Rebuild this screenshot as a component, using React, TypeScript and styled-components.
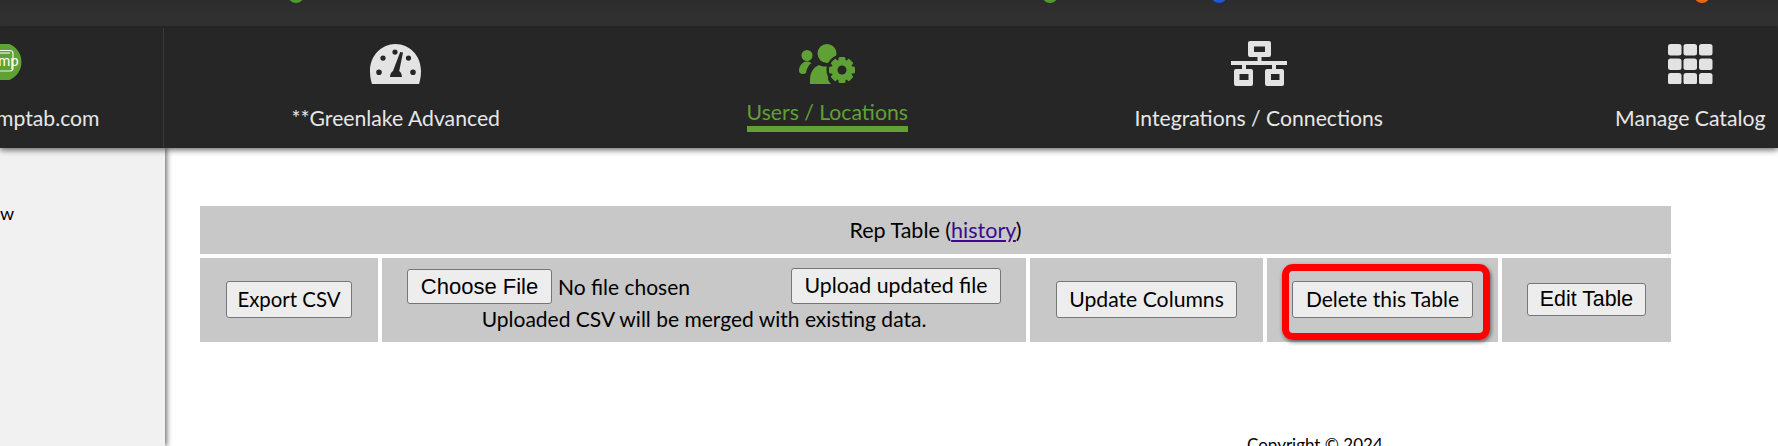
import styled, { createGlobalStyle } from "styled-components";

const GlobalStyle = createGlobalStyle`
  html, body {
    margin: 0;
    padding: 0;
    height: 100%;
    overflow: hidden;
    background: #fff;
    font-family: "Lato", "Noto Sans", sans-serif;
  }
`;

const Page = styled.div`
  width: 1778px;
  height: 446px;
  display: flex;
  flex-direction: column;
  overflow: hidden;
`;

const TopBar = styled.div`
  height: 26px;
  flex: none;
  background: linear-gradient(#2c2c2c, #323232);
  border-bottom: 2px solid #2a2a2a;
  display: grid;
  grid-template-columns: 288px 16px 738px 16px 153px 16px 467px 16px;
  overflow: hidden;
`;

const Dot = styled.span<{ $color: string }>`
  width: 16px;
  height: 16px;
  margin-top: -13px;
  border-radius: 50%;
  background: ${({ $color }) => $color};
`;

const Nav = styled.nav`
  height: 120px;
  flex: none;
  background: #262626;
  display: flex;
  position: relative;
  z-index: 2;
  box-shadow: 0 2px 6px rgba(0, 0, 0, 0.6);
`;

const LogoItem = styled.div`
  width: 164px;
  flex: none;
  box-sizing: border-box;
  border-right: 1px solid #393939;
  display: flex;
  flex-direction: column;
  overflow: hidden;
`;

const LogoMark = styled.svg`
  display: block;
  margin-top: 16px;
  width: 22px;
  height: 36px;
`;

const LogoLabel = styled.span`
  margin-top: 26px;
  margin-left: -4px;
  font-size: 21.2px;
  line-height: 24px;
  color: #e6e6e6;
  white-space: nowrap;
`;

const NavItem = styled.a<{ $active?: boolean }>`
  width: 431.5px;
  flex: none;
  display: flex;
  flex-direction: column;
  align-items: center;
  padding-top: 16px;
  box-sizing: border-box;
  color: ${({ $active }) => ($active ? "#5fa135" : "#e6e6e6")};
`;

const FirstGap = styled.div`
  width: 16px;
  flex: none;
`;

const IconSlot = styled.div`
  height: 40px;
  display: flex;
  align-items: center;
  justify-content: center;
`;

const NavLabel = styled.span<{ $active?: boolean }>`
  margin-top: ${({ $active }) => ($active ? "16px" : "22px")};
  font-size: 21.2px;
  line-height: 24px;
  white-space: nowrap;
  padding-bottom: ${({ $active }) => ($active ? "2px" : "0")};
  border-bottom: ${({ $active }) => ($active ? "6px solid #5fa135" : "none")};
`;

const Body = styled.div`
  flex: 1;
  display: flex;
  min-height: 0;
`;

const Sidebar = styled.aside`
  width: 165px;
  flex: none;
  background: #f1f1f1;
  box-shadow: 2px 0 5px rgba(0, 0, 0, 0.55);
  padding-top: 53px;
  font-size: 18px;
  line-height: 24px;
  color: #000;
  overflow: hidden;
`;

const Main = styled.main`
  flex: 1;
  padding: 58px 107px 0 35px;
  min-width: 0;
`;

const Table = styled.div`
  display: grid;
  grid-template-columns: 178px 644px 233px 231px 169px;
  grid-template-rows: 48px 84px;
  gap: 4px;
  width: 1471px;
`;

const TitleCell = styled.div`
  grid-column: 1 / -1;
  background: #c8c8c8;
  display: flex;
  align-items: center;
  justify-content: center;
  font-size: 21.5px;
  color: #000;
`;

const HistoryLink = styled.a`
  color: #3c0a8c;
  text-decoration: underline;
`;

const Cell = styled.div`
  background: #c8c8c8;
  display: flex;
  align-items: center;
  justify-content: center;
  padding-bottom: 1px;
  box-sizing: border-box;
  position: relative;
`;

const UploadCell = styled.div`
  background: #c8c8c8;
  display: flex;
  flex-direction: column;
  padding: 9px 25px 0;
  font-size: 21px;
  color: #000;
`;

const UploadRow = styled.div`
  display: flex;
  align-items: center;
  justify-content: space-between;
`;

const FilePicker = styled.div`
  display: flex;
  align-items: center;
  gap: 6px;
  margin-top: 2px;
`;

const UploadNote = styled.div`
  text-align: center;
  line-height: 24px;
  margin-top: 3px;
`;

const Button = styled.button<{ $system?: boolean; $width: number; $height: number; $size: number }>`
  width: ${({ $width }) => $width}px;
  height: ${({ $height }) => $height}px;
  padding: 0 0 ${({ $system }) => ($system ? "0" : "2px")};
  background: #ededed;
  border: 1px solid #767676;
  border-radius: 3px;
  color: #000;
  font-family: ${({ $system }) => ($system ? '"Liberation Sans", Arial, sans-serif' : '"Lato", "Noto Sans", sans-serif')};
  font-size: ${({ $size }) => $size}px;
`;

const Highlight = styled.div`
  position: absolute;
  left: 15px;
  top: 6px;
  width: 208px;
  height: 76px;
  box-sizing: border-box;
  border: 7px solid #fe0000;
  border-radius: 11px;
  box-shadow: 1px 2px 4px rgba(0, 0, 0, 0.55);
  pointer-events: none;
`;

const Footer = styled.div`
  margin-top: 91px;
  padding-left: 1047px;
  font-size: 17px;
  line-height: 24px;
  color: #000;
  white-space: nowrap;
`;

const ICON = "#e3e3e3";
const GREEN = "#5fa135";
const NAV_BG = "#262626";

const GaugeIcon = () => (
  <svg width="51" height="40" viewBox="0 0 51 40">
    <path
      fill={ICON}
      fillRule="evenodd"
      d="M25.5 0C11.5 0 0 11.5 0 27c0 5 .8 9.500 2 13h47c1.200-3.500 2-8 2-13C51 11.500 39.500 0 25.500 0ZM25 5.500a2.600 2.600 0 1 1 0 5.200 2.600 2.600 0 0 1 0-5.200ZM13 11.500a2.600 2.600 0 1 1 0 5.200 2.600 2.600 0 0 1 0-5.200ZM38.500 11.500a2.600 2.600 0 1 1 0 5.200 2.600 2.600 0 0 1 0-5.200ZM9 25.500a2.800 2.800 0 1 1 0 5.600 2.800 2.800 0 0 1 0-5.600ZM43 25.500a2.800 2.800 0 1 1 0 5.600 2.800 2.800 0 0 1 0-5.600ZM30.200 8l2.800.6-3.800 18.500c1.600 1 2.600 3 2.800 6H20c.2-3 1.200-5 3-6Z"
    />
  </svg>
);

const UsersGearIcon = () => (
  <svg width="57" height="40" viewBox="0 0 57 40">
    <g fill={GREEN}>
      <circle cx="8" cy="11.500" r="5.500" />
      <path d="M0 27c0-6 4-9 7-9.500 2-.3 4 .2 5.500 1.500-3 2-5 6-5.500 10-2.500 2-7 1-7-2Z" />
      <ellipse cx="28" cy="9.500" rx="9.500" ry="9.500" />
      <path d="M11 40v-4c0-8 4-13 9-15 4 2 9 2 13 0l5 2c-6 3-9 7-9 11 0 2 1 4 3 6Z" />
    </g>
    <circle cx="43" cy="26" r="15.500" fill={NAV_BG} />
    <g fill={GREEN}>
      <circle cx="43" cy="26" r="10.500" />
      {[0, 45, 90, 135].map((angle) => (
        <rect key={angle} x="39.500" y="13" width="7" height="26" rx="1.500" transform={`rotate(${angle} 43 26)`} />
      ))}
    </g>
    <circle cx="43" cy="26" r="4.500" fill={NAV_BG} />
  </svg>
);

const NetworkIcon = () => (
  <svg width="56" height="46" viewBox="0 0 56 46">
    <g fill={ICON}>
      <path
        fillRule="evenodd"
        d="M19 0h19a2 2 0 0 1 2 2v12a2 2 0 0 1-2 2h-7.500v4H56v4H45v4h6a2 2 0 0 1 2 2v13a2 2 0 0 1-2 2H36a2 2 0 0 1-2-2V30a2 2 0 0 1 2-2h5v-4H15v4h5a2 2 0 0 1 2 2v13a2 2 0 0 1-2 2H5a2 2 0 0 1-2-2V30a2 2 0 0 1 2-2h6v-4H0v-4h26.500v-4H19a2 2 0 0 1-2-2V2a2 2 0 0 1 2-2Zm4 5.500V11h11V5.500ZM8.500 33v6h9v-6Zm31.500 0v6h8.500v-6Z"
      />
    </g>
  </svg>
);

const GridIcon = () => (
  <svg width="45" height="40" viewBox="0 0 45 40">
    <g fill={ICON}>
      {[0, 15.5, 31].map((x) =>
        [0, 14.5, 29].map((y) => <rect key={`${x}-${y}`} x={x} y={y} width="13.5" height="11.5" rx="2.5" />),
      )}
    </g>
  </svg>
);

const LogoIcon = () => (
  <LogoMark viewBox="0 0 22 36">
    <circle cx="2" cy="18" r="19.5" fill={GREEN} />
    <path d="M-4 6.500h14a3 3 0 0 1 3 3V24a3 3 0 0 1-3 3H-4" fill="none" stroke="#eef4e6" strokeWidth="1.200" />
    <path d="M-4 9h14" stroke="#eef4e6" strokeWidth="1.200" />
    <text x="-2" y="22" fontSize="15" fill="#fff" fontFamily="Lato, sans-serif">
      mp
    </text>
  </LogoMark>
);

function App() {
  return (
    <>
      <GlobalStyle />
      <Page>
        <TopBar>
          <span />
          <Dot $color="#4f9a2e" />
          <span />
          <Dot $color="#4f9a2e" />
          <span />
          <Dot $color="#1f55d8" />
          <span />
          <Dot $color="#e8670f" />
        </TopBar>
        <Nav>
          <LogoItem>
            <LogoIcon />
            <LogoLabel>mptab.com</LogoLabel>
          </LogoItem>
          <FirstGap />
          <NavItem>
            <IconSlot>
              <GaugeIcon />
            </IconSlot>
            <NavLabel>**Greenlake Advanced</NavLabel>
          </NavItem>
          <NavItem $active>
            <IconSlot>
              <UsersGearIcon />
            </IconSlot>
            <NavLabel $active>Users / Locations</NavLabel>
          </NavItem>
          <NavItem>
            <IconSlot>
              <NetworkIcon />
            </IconSlot>
            <NavLabel>Integrations / Connections</NavLabel>
          </NavItem>
          <NavItem>
            <IconSlot>
              <GridIcon />
            </IconSlot>
            <NavLabel>Manage Catalog</NavLabel>
          </NavItem>
        </Nav>
        <Body>
          <Sidebar>w</Sidebar>
          <Main>
            <Table>
              <TitleCell>
                <span>
                  Rep Table (<HistoryLink>history</HistoryLink>)
                </span>
              </TitleCell>
              <Cell>
                <Button $width={126} $height={37} $size={20.4}>
                  Export CSV
                </Button>
              </Cell>
              <UploadCell>
                <UploadRow>
                  <FilePicker>
                    <Button $system $width={145} $height={35} $size={22}>
                      Choose File
                    </Button>
                    <span>No file chosen</span>
                  </FilePicker>
                  <Button $width={210} $height={36} $size={21.3}>
                    Upload updated file
                  </Button>
                </UploadRow>
                <UploadNote>Uploaded CSV will be merged with existing data.</UploadNote>
              </UploadCell>
              <Cell>
                <Button $width={181} $height={37} $size={21.2}>
                  Update Columns
                </Button>
              </Cell>
              <Cell>
                <Button $width={181} $height={37} $size={21}>
                  Delete this Table
                </Button>
                <Highlight />
              </Cell>
              <Cell>
                <Button $system $width={119} $height={33} $size={21.33}>
                  Edit Table
                </Button>
              </Cell>
            </Table>
            <Footer>Copyright © 2024</Footer>
          </Main>
        </Body>
      </Page>
    </>
  );
}

export default App;
